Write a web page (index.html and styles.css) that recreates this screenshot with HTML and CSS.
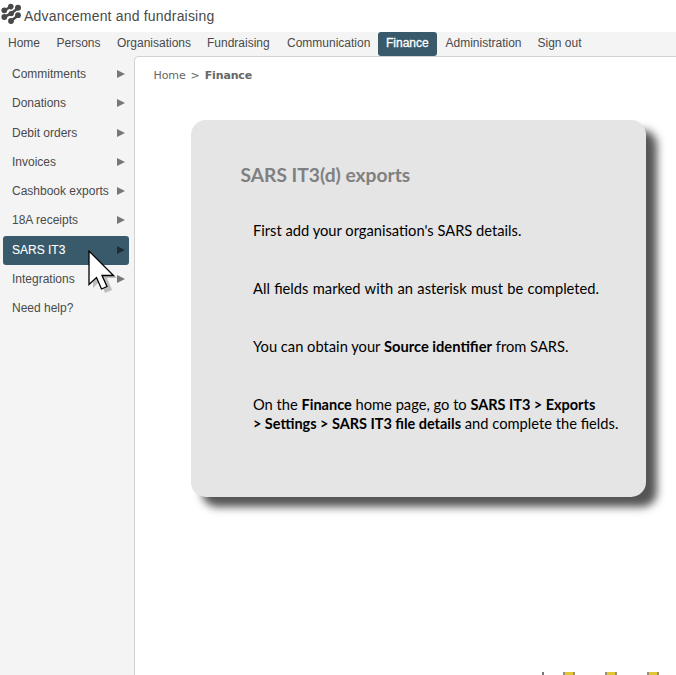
FILE: index.html
```
<!DOCTYPE html>
<html lang="en">
<head>
<meta charset="utf-8">
<title>Advancement and fundraising</title>
<link rel="stylesheet" href="styles.css">
</head>
<body>
<header class="brand">
  <svg class="logo" width="22" height="26" viewBox="0 0 22 26">
    <g fill="none" stroke="#484848" stroke-width="2.600">
      <path d="M4.300 10.500L11 6.500M4.300 17L11.200 13.500L18 8M11 21L18 15.500"/>
    </g>
    <g fill="#484848"><circle cx="4.300" cy="10.300" r="2.900"/><circle cx="10.800" cy="6.600" r="2.800"/><circle cx="18" cy="7.800" r="3"/><circle cx="4.300" cy="17" r="2.900"/><circle cx="11.200" cy="13.600" r="2.700"/><circle cx="18" cy="15.200" r="2.900"/><circle cx="11" cy="21" r="2.900"/></g>
  </svg>
  <span class="brand-name">Advancement and fundraising</span>
</header>
<nav class="topnav">
  <a class="n1">Home</a><a class="n2">Persons</a><a class="n3">Organisations</a><a class="n4">Fundraising</a><a class="n5">Communication</a><a class="n6 active">Finance</a><a class="n7">Administration</a><a class="n8">Sign out</a>
</nav>
<div class="body">
  <aside class="side">
    <a>Commitments<i></i></a>
    <a>Donations<i></i></a>
    <a>Debit orders<i></i></a>
    <a>Invoices<i></i></a>
    <a>Cashbook exports<i></i></a>
    <a>18A receipts<i></i></a>
    <a class="active">SARS IT3<i></i></a>
    <a>Integrations<i></i></a>
    <a>Need help?</a>
  </aside>
  <main class="content">
    <div class="crumbs"><span>Home</span><span class="sep">&gt;</span><b>Finance</b></div>
    <section class="card">
      <h1>SARS IT3(d) exports</h1>
      <p>First add your organisation's SARS details.</p>
      <p class="wide">All fields marked with an asterisk must be completed.</p>
      <p>You can obtain your <b>Source identifier</b> from SARS.</p>
      <p class="steps">On the <b>Finance</b> home page, go to <b>SARS IT3 &gt; Exports</b><br><b>&gt; Settings &gt; SARS IT3 file details</b> and complete the fields.</p>
    </section>
    <div class="stubs"><i class="tick"></i><i></i><i></i><i></i></div>
  </main>
</div>
<svg class="cursor" width="30" height="44" viewBox="0 0 30 44">
  <path d="M5 5V38L12 31L17 43L24 40L19 28H29Z" fill="#000" opacity=".22"/>
  <path d="M1 1V34.500L8.500 27.500L13.500 39L19 36.500L14 25.500H25.500Z" fill="#fff" stroke="#000" stroke-width="1.300"/>
</svg>
</body>
</html>
```
FILE: styles.css
```
* { box-sizing: border-box; }
body {
  margin: 0;
  height: 675px;
  overflow: hidden;
  position: relative;
  display: flex;
  flex-direction: column;
  background: #fff;
  color: #4a4a4a;
  font: 12px/14px "Liberation Sans", Arial, sans-serif;
}
.brand { height: 32px; display: flex; }
.logo { flex: none; }
.brand-name { font: 14px/16px "Liberation Sans", Arial, sans-serif; letter-spacing: .19px; margin: 8px 0 0 2px; white-space: nowrap; }
.topnav { height: 24px; flex: none; background: #f4f4f4; display: flex; white-space: nowrap; }
.topnav a { height: 24px; padding: 4px 0 0 8px; border-radius: 3px; flex: none; }
.n1 { width: 48.500px; } .n2 { width: 60.500px; } .n3 { width: 90px; } .n4 { width: 80px; }
.n5 { width: 99px; } .n6 { width: 59px; } .n7 { width: 92px; margin-left: .5px; } .n8 { width: 70px; }
.topnav .active { background: #385a6b; color: #fff; -webkit-text-stroke: .3px #fff; }
.body { flex: 1; display: flex; background: #f4f4f4; }
.side { width: 134px; flex: none; padding: 4px 5px 0 3px; display: flex; flex-direction: column; }
.side a { height: 29.250px; padding: 0 4px 1px 9px; display: flex; align-items: center; justify-content: space-between; border-radius: 3px; white-space: nowrap; }
.side i { border: solid transparent; border-width: 4.500px 0 4.500px 8px; border-left-color: #777; flex: none; }
.side .active { background: #385a6b; color: #fff; -webkit-text-stroke: .1px #fff; }
.side .active i { border-left-color: #202c33; }
.content { flex: 1; background: #fff; border: solid #d2d2d2; border-width: 1px 0 0 1px; border-radius: 5px 0 0 0; display: flex; flex-direction: column; }
.crumbs { display: flex; gap: 5px; margin: 12px 0 0 18.500px; font: 11px/14px "DejaVu Sans", Verdana, sans-serif; color: #666; }
.crumbs span { letter-spacing: -.1px; }
.crumbs b { letter-spacing: -.15px; }
.card {
  width: 455px; height: 377px; margin: 37px 0 0 56px; padding: 44px 0 0 62px;
  background: #e5e5e5; border-radius: 15px;
  box-shadow: 11px 10px 8px #555;
  color: #000; font: 14.700px/19px Lato, sans-serif; white-space: nowrap;
}
.card h1 { margin: 0 0 35px -12.500px; font: bold 19.200px/22px Lato, sans-serif; color: #808080; }
.card p { margin: 0 0 39px; }
.card .wide { word-spacing: .6px; }
.steps b { font-size: 14.500px; word-spacing: -.1px; }
.stubs { margin-top: auto; padding-left: 407px; display: flex; align-items: flex-end; height: 3px; }
.stubs i { width: 12px; height: 3px; margin-right: 30px; background: #e3c634; border: solid #999078; border-width: 0 2px; }
.stubs .tick { width: 2px; border: 0; background: #777; margin-right: 19px; }
.cursor { position: absolute; left: 87.500px; top: 249.500px; }
```
